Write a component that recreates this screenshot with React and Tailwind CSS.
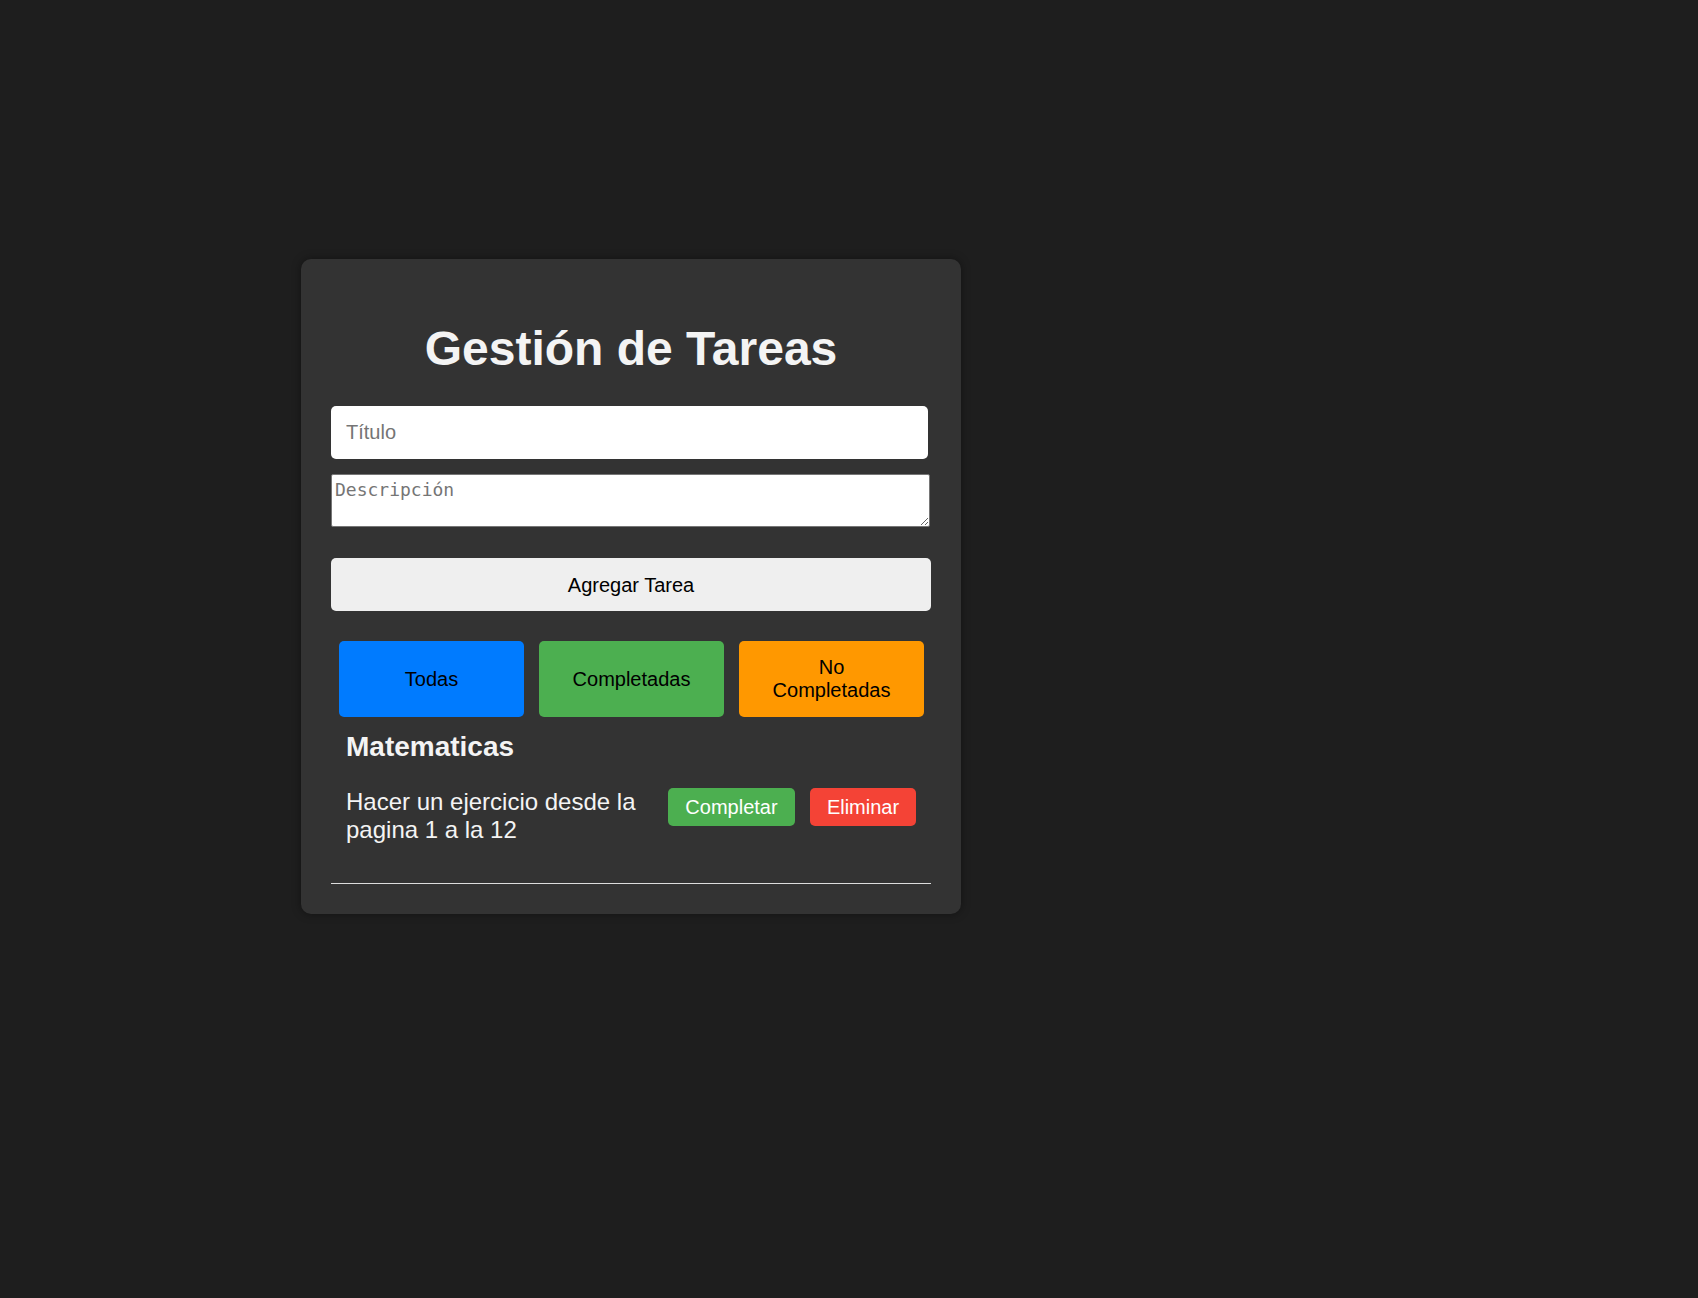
import { useState } from 'react';

const filters = [
  { label: 'Todas', color: 'bg-[#007bff]' },
  { label: 'Completadas', color: 'bg-[#4caf50]' },
  { label: 'No Completadas', color: 'bg-[#ff9800]' },
];

export default function App() {
  const [title, setTitle] = useState('');
  const [desc, setDesc] = useState('');

  return (
    <div className="min-h-screen bg-[#1e1e1e] pt-[259px] pl-[301px] font-['Liberation_Sans',Arial,sans-serif]">
      <div className="w-[660px] rounded-[10px] bg-[#333333] p-[30px] shadow-[0_0_10px_rgba(0,0,0,0.4)]">
        <h1 className="mt-[32px] text-center text-[48px] leading-[55px] font-bold text-[#f4f4f4]">
          Gestión de Tareas
        </h1>

        {/* Form */}
        <input
          type="text"
          value={title}
          onChange={(e) => setTitle(e.target.value)}
          placeholder="Título"
          className="mt-[30px] block h-[53px] w-[597px] rounded-[5px] bg-white px-[15px] text-[20px] text-black outline-none placeholder:text-[#757575]"
        />
        <textarea
          value={desc}
          onChange={(e) => setDesc(e.target.value)}
          placeholder="Descripción"
          className="mt-[15px] block h-[53px] w-[599px] rounded-[2px] border border-[#767676] bg-white px-[3px] pt-[4px] pb-[2px] font-['DejaVu_Sans_Mono',monospace] text-[18px] leading-[21px] text-black outline-none placeholder:text-[#757575]"
        />
        <button className="mt-[31px] block h-[53px] w-[600px] rounded-[5px] bg-[#efefef] text-[20px] text-black">
          Agregar Tarea
        </button>

        {/* Filters */}
        <div className="mt-[30px] flex gap-[15px] pl-[8px]">
          {filters.map((f) => (
            <button
              key={f.label}
              className={`h-[76px] w-[185px] rounded-[5px] px-[20px] text-[20px] leading-[23px] text-black ${f.color}`}
            >
              {f.label}
            </button>
          ))}
        </div>

        {/* Task */}
        <h3 className="mt-[14px] px-[15px] text-[28px] leading-[32px] font-bold text-[#f4f4f4]">
          Matematicas
        </h3>
        <div className="mt-[25px] flex items-start px-[15px]">
          <p className="flex-1 text-[24px] leading-[27.6px] text-[#f4f4f4]">
            Hacer un ejercicio desde la pagina 1 a la 12
          </p>
          <div className="ml-[15px] flex shrink-0 gap-[15px]">
            <button className="h-[38px] w-[127px] rounded-[5px] bg-[#4caf50] text-[20px] text-white">
              Completar
            </button>
            <button className="h-[38px] w-[106px] rounded-[5px] bg-[#f44336] text-[20px] text-white">
              Eliminar
            </button>
          </div>
        </div>
        <hr className="mt-[40px] border-t border-[#dddddd]" />
      </div>
    </div>
  );
}
